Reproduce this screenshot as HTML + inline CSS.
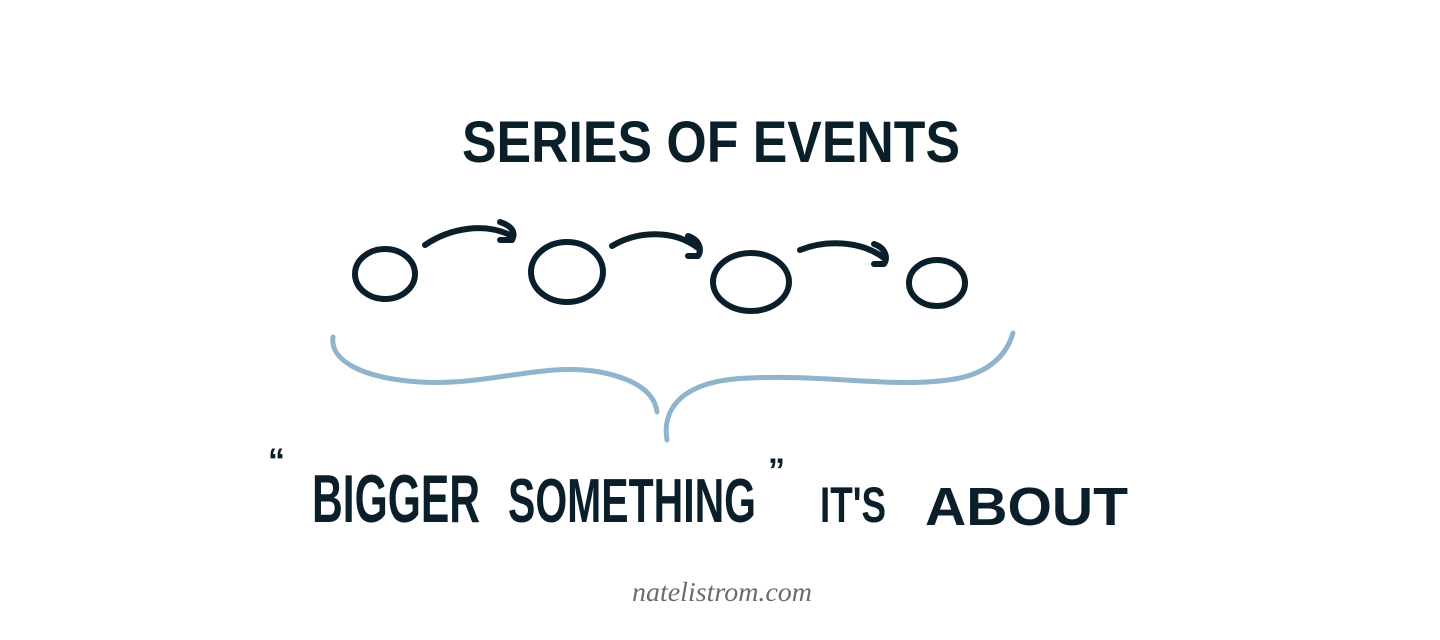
<!DOCTYPE html>
<html><head><meta charset="utf-8"><style>
html,body{margin:0;padding:0;background:#fff;}
svg{display:block}
</style></head><body>
<svg width="1440" height="640" viewBox="0 0 1440 640" xmlns="http://www.w3.org/2000/svg">
<g font-family="Liberation Sans, sans-serif" font-weight="bold" fill="#0b1f2b">
<text x="462" y="162" font-size="58" textLength="498" lengthAdjust="spacingAndGlyphs">SERIES OF EVENTS</text>
<text x="268" y="472" font-size="34">“</text>
<text x="312" y="522" font-size="68" textLength="168" lengthAdjust="spacingAndGlyphs">BIGGER</text>
<text x="508" y="522" font-size="62" textLength="248" lengthAdjust="spacingAndGlyphs">SOMETHING</text>
<text x="768" y="482" font-size="34">”</text>
<text x="820" y="522" font-size="50" textLength="66" lengthAdjust="spacingAndGlyphs">IT'S</text>
<text x="925" y="525" font-size="54" textLength="203" lengthAdjust="spacingAndGlyphs">ABOUT</text>
</g>
<g fill="none" stroke="#0b1f2b" stroke-width="6" stroke-linecap="round" stroke-linejoin="round">
<ellipse cx="385" cy="274" rx="30" ry="25"/>
<ellipse cx="567" cy="272" rx="36" ry="30"/>
<ellipse cx="751" cy="282" rx="38" ry="29"/>
<ellipse cx="937" cy="283" rx="28" ry="23"/>
<path d="M425 245 C450 228 485 222 512 236 M500 222 C512 226 516 232 512 240 L500 240"/>
<path d="M612 246 C635 232 672 228 698 248 M688 236 C700 240 702 250 698 256 L688 256"/>
<path d="M800 250 C825 240 860 240 884 258 M874 244 C886 248 888 258 884 264 L874 264"/>
</g>
<path d="M333 337 C330 360 360 378 420 382 C490 386 540 362 600 372 C640 380 655 395 657 412 M667 440 C662 410 680 380 750 378 C830 374 900 390 960 378 C995 370 1008 350 1013 333" fill="none" stroke="#8fb4cc" stroke-width="5" stroke-linecap="round"/>
<text x="632" y="601" font-family="Liberation Serif, serif" font-style="italic" font-size="27" fill="#6b6b6b" textLength="180" lengthAdjust="spacingAndGlyphs">natelistrom.com</text>
</svg>
</body></html>
